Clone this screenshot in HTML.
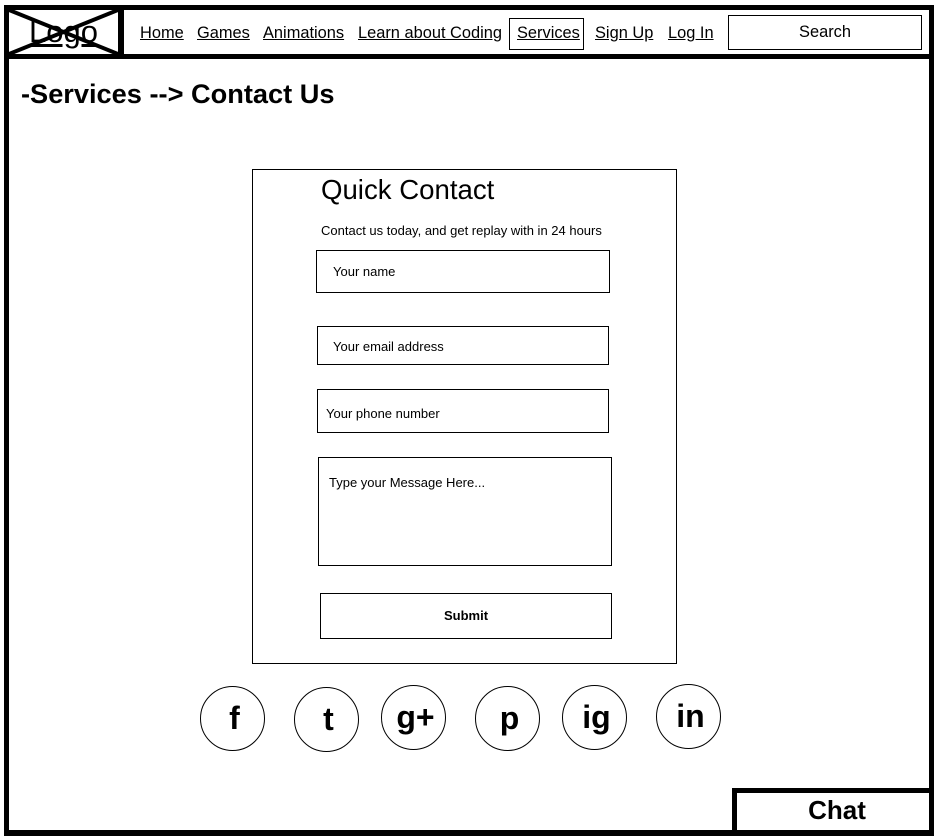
<!DOCTYPE html>
<html><head><meta charset="utf-8">
<style>
*{margin:0;padding:0;box-sizing:border-box}
body{width:940px;height:840px;background:#fff;position:relative;overflow:hidden;font-family:"Liberation Sans",Arial,sans-serif;color:#000}
.a{position:absolute}
.blk{position:absolute;background:#000}
.nav{position:absolute;top:24px;font-size:16.4px;text-decoration:underline;line-height:18px}
.box{position:absolute;border:1px solid #000}
.f{position:absolute;border:1px solid #000;font-size:13px}
.f span{position:absolute}
.c{position:absolute;width:65px;height:65px;border:1px solid #000;border-radius:50%;font-weight:bold;font-size:32px;text-align:center;line-height:62px;padding-left:4px}
</style></head><body>
<div class="blk" style="left:4px;top:5px;width:930px;height:5px"></div>
<div class="blk" style="left:4px;top:5px;width:5px;height:831px"></div>
<div class="blk" style="left:929px;top:5px;width:5px;height:831px"></div>
<div class="blk" style="left:4px;top:830px;width:930px;height:6px"></div>
<div class="blk" style="left:4px;top:54px;width:930px;height:5px"></div>
<div class="blk" style="left:118px;top:5px;width:6px;height:54px"></div>
<div class="a" style="left:9px;top:6px;width:109px;height:48px;font-size:31px;text-decoration:underline;text-align:center;line-height:52px">Logo</div>
<svg class="a" style="left:9px;top:10px" width="109" height="44"><line x1="0" y1="0" x2="109" y2="44" stroke="#000" stroke-width="4"/><line x1="109" y1="0" x2="0" y2="44" stroke="#000" stroke-width="4"/></svg>
<div class="nav" style="left:140px">Home</div>
<div class="nav" style="left:197px">Games</div>
<div class="nav" style="left:263px">Animations</div>
<div class="nav" style="left:358px">Learn about Coding</div>
<div class="box" style="left:509px;top:18px;width:75px;height:32px"></div>
<div class="nav" style="left:517px">Services</div>
<div class="nav" style="left:595px">Sign Up</div>
<div class="nav" style="left:668px">Log In</div>
<div class="box" style="left:728px;top:15px;width:194px;height:35px;font-size:16.4px;text-align:center;line-height:33px">Search</div>
<div class="a" style="left:21px;top:78px;font-size:27.2px;font-weight:bold">-Services --&gt; Contact Us</div>
<div class="box" style="left:252px;top:169px;width:425px;height:495px"></div>
<div class="a" style="left:321px;top:174px;font-size:27.6px">Quick Contact</div>
<div class="a" style="left:321px;top:223px;font-size:13px">Contact us today, and get replay with in 24 hours</div>
<div class="f" style="left:316px;top:250px;width:294px;height:43px"><span style="left:16px;top:13px">Your name</span></div>
<div class="f" style="left:317px;top:326px;width:292px;height:39px"><span style="left:15px;top:12px">Your email address</span></div>
<div class="f" style="left:317px;top:389px;width:292px;height:44px"><span style="left:8px;top:16px">Your phone number</span></div>
<div class="f" style="left:318px;top:457px;width:294px;height:109px"><span style="left:10px;top:17px">Type your Message Here...</span></div>
<div class="f" style="left:320px;top:593px;width:292px;height:46px;font-weight:bold;text-align:center;line-height:44px">Submit</div>
<div class="c" style="left:200px;top:686px">f</div>
<div class="c" style="left:294px;top:687px">t</div>
<div class="c" style="left:381px;top:685px">g+</div>
<div class="c" style="left:475px;top:686px">p</div>
<div class="c" style="left:562px;top:685px">ig</div>
<div class="c" style="left:656px;top:684px">in</div>
<div class="a" style="left:732px;top:788px;width:202px;height:48px;border:5px solid #000;font-size:26px;font-weight:bold;text-align:center;line-height:34px;padding-left:8px">Chat</div>
</body></html>
